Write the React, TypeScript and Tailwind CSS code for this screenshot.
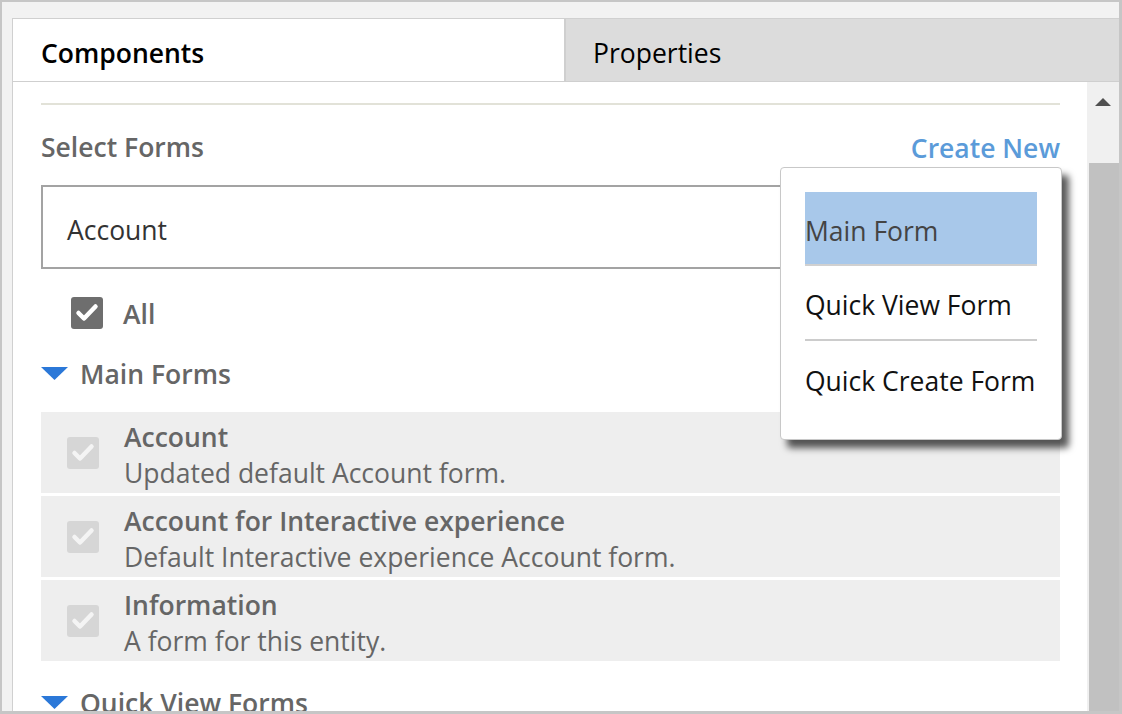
import React from "react";

const font = { fontFamily: '"Open Sans", "Noto Sans", sans-serif' };

const Check = ({ color }: { color: string }) => (
	<svg viewBox="0 0 32 32" className="w-full h-full">
		<path d="M7.5 16 L13 21.5 L24.5 9.5" fill="none" stroke={color} strokeWidth="4.5" strokeLinecap="round" strokeLinejoin="round" />
	</svg>
);

const Caret = () => (
	<svg width="27" height="13" viewBox="0 0 27 13" className="shrink-0">
		<polygon points="0,0 27,0 13.5,13" fill="#2b78d8" />
	</svg>
);

const forms = [
	{ name: "Account", desc: "Updated default Account form." },
	{ name: "Account for Interactive experience", desc: "Default Interactive experience Account form." },
	{ name: "Information", desc: "A form for this entity." },
];

const menu = ["Main Form", "Quick View Form", "Quick Create Form"];

export default function App() {
	return (
		<div
			className="relative w-[1122px] h-[714px] overflow-hidden bg-[#f2f2f2] border-t-2 border-l-2 border-r-[3px] border-b-[3px] border-[#c6c6c6]"
			style={font}
		>
			<div className="pl-[10px] pt-[16px] h-full">
				<div className="flex flex-col h-full border-l border-t border-[#d0d0d0] bg-white">
					{/* tabs */}
					<div className="flex h-[63px] border-b border-[#cfcfcf] shrink-0">
						<div className="w-[553px] flex items-center pl-[28px] pt-[8px] bg-white text-[26.5px] font-semibold text-black border-r-2 border-[#cfcfcf]">
							Components
						</div>
						<div className="flex-1 flex items-center pl-[27px] pt-[8px] bg-[#dcdcdc] text-[26.5px] text-black">
							Properties
						</div>
					</div>

					<div className="flex flex-1 min-h-0">
						{/* content */}
						<div className="flex-1 pl-[28px] pr-[27px] overflow-hidden">
							<div className="mt-[21px] h-[2px] bg-[#e2e2d8]" />
							<div className="h-[80px] flex items-center justify-between">
								<span className="text-[26.5px] font-semibold text-[#666] mt-[6px]">Select Forms</span>
								<span className="text-[26.5px] font-semibold text-[#5b9bd9] mt-[8px]">Create New</span>
							</div>
							<div className="h-[84px] border-2 border-[#a3a3a3] flex items-center pl-[24px] pt-[8px] text-[26.5px] text-[#333]">
								Account
							</div>
							<div className="h-[88px] flex items-center pl-[30px] gap-[20px]">
								<div className="w-[32px] h-[32px] rounded-[3px] bg-[#6e6e6e]">
									<Check color="#fff" />
								</div>
								<span className="text-[26.5px] font-semibold text-[#666] mt-[4px]">All</span>
							</div>
							<div className="h-[32px] flex items-center gap-[12px]">
								<Caret />
								<span className="text-[26.5px] font-semibold text-[#666] mt-[4px]">Main Forms</span>
							</div>
							<div className="mt-[23px] flex flex-col gap-[3px]">
								{forms.map((f) => (
									<div key={f.name} className="h-[81px] bg-[#eeeeee] flex items-center pl-[26px]">
										<div className="w-[32px] h-[32px] rounded-[3px] bg-[#d6d6d6] shrink-0">
											<Check color="#f4f4f4" />
										</div>
										<div className="ml-[25px] mt-[4px] flex flex-col text-[#666] text-[26.5px] leading-[36px]">
											<span className="font-semibold">{f.name}</span>
											<span>{f.desc}</span>
										</div>
									</div>
								))}
							</div>
							<div className="mt-[25px] h-[32px] flex items-center gap-[12px]">
								<Caret />
								<span className="text-[26.5px] font-semibold text-[#666] mt-[4px]">Quick View Forms</span>
							</div>
						</div>

						{/* scrollbar */}
						<div className="w-[32px] flex flex-col bg-[#f0f0f0] shrink-0">
							<div className="h-[81px] flex justify-center pt-[16px]">
								<svg width="16" height="8" viewBox="0 0 16 8">
									<polygon points="0,8 16,8 8,0" fill="#505050" />
								</svg>
							</div>
							<div className="flex-1 ml-[2px] bg-[#c1c1c1]" />
						</div>
					</div>
				</div>
			</div>

			{/* dropdown menu */}
			<div className="absolute left-[778px] top-[165px] w-[282px] rounded-[4px] border border-[#c8c8c8] bg-white px-[24px] py-[24px] shadow-[7px_8px_7px_rgba(0,0,0,0.65)]">
				{menu.map((m, i) => (
					<div
						key={m}
						className={
							i === 0
								? "h-[74px] flex items-center pt-[7px] bg-[#a8c8ea] text-[#444] text-[26.5px] border-b-2 border-[#d0d0d0]"
								: i === 1
								? "h-[75px] flex items-center pt-[7px] text-[#111] text-[26.5px] border-b-2 border-[#cccccc]"
								: "h-[74px] flex items-center pt-[7px] text-[#111] text-[26.5px]"
						}
					>
						{m}
					</div>
				))}
			</div>
		</div>
	);
}
